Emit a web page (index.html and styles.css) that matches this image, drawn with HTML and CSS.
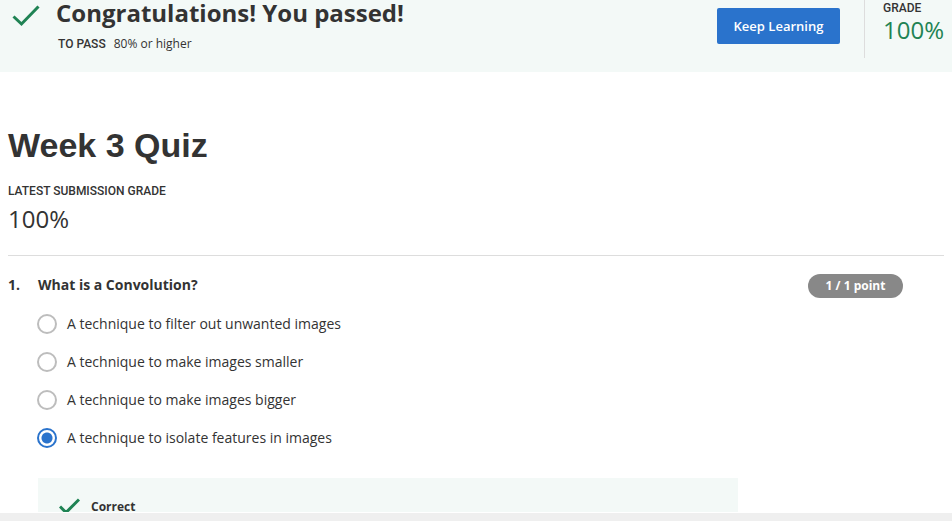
FILE: index.html
```html
<!DOCTYPE html>
<html lang="en">
<head>
<meta charset="utf-8">
<meta name="viewport" content="width=device-width, initial-scale=1">
<title>Week 3 Quiz</title>
<link rel="stylesheet" href="styles.css">
</head>
<body>
<header class="banner">
  <svg class="banner-check" viewBox="0 0 28 22" aria-hidden="true"><path d="M1.5 11.5 L9.5 19 L26.5 1.5"/></svg>
  <div class="banner-text">
    <h2 class="banner-title">Congratulations! You passed!</h2>
    <p class="banner-note"><span class="eyebrow">TO PASS</span> <span>80% or higher</span></p>
  </div>
  <button class="continue" type="button">Keep Learning</button>
  <div class="banner-grade">
    <span class="eyebrow">GRADE</span>
    <span class="grade grade-passed">100%</span>
  </div>
</header>
<main class="content">
  <h1 class="title">Week 3 Quiz</h1>
  <section class="latest">
    <span class="eyebrow">LATEST SUBMISSION GRADE</span>
    <span class="grade">100%</span>
  </section>
  <section class="question">
    <span class="number">1.</span>
    <div class="question-body">
      <h3 class="prompt" id="q1">What is a Convolution?</h3>
      <div class="options" role="radiogroup" aria-labelledby="q1">
        <label class="option"><input type="radio" name="q1"> A technique to filter out unwanted images</label>
        <label class="option"><input type="radio" name="q1"> A technique to make images smaller</label>
        <label class="option"><input type="radio" name="q1"> A technique to make images bigger</label>
        <label class="option"><input type="radio" name="q1" checked> A technique to isolate features in images</label>
      </div>
      <div class="feedback">
        <svg class="feedback-check" viewBox="0 0 21 17" aria-hidden="true"><path d="M1 8.5 L7 14.5 L20 1.5"/></svg>
        <strong>Correct</strong>
      </div>
    </div>
    <span class="points">1 / 1 point</span>
  </section>
</main>
<div class="edge"></div>
</body>
</html>
```
FILE: styles.css
```css
* { box-sizing: border-box; }

body {
  display: flex;
  flex-direction: column;
  height: 100vh;
  margin: 0;
  overflow: hidden;
  background: #fff;
  color: #333;
  font: 14px/20px "Open Sans", sans-serif;
}

h1, h2, h3, p { margin: 0; }

.eyebrow {
  font: 500 12px/16px Roboto, sans-serif;
}

.grade {
  font-size: 24px;
  line-height: 28px;
}

.grade-passed { color: #1f8354; }

.banner {
  display: flex;
  flex: none;
  align-items: flex-start;
  height: 72px;
  padding: 0 8px 0 12px;
  background: #f3f9f7;
}

.banner-check {
  width: 28px;
  height: 22px;
  margin: 5px 16px 0 0;
}

.banner-check path, .feedback-check path {
  fill: none;
  stroke: #1f8354;
  stroke-width: 3;
}

.banner-text { flex: 1; }

.banner-title {
  font-size: 24px;
  line-height: 26px;
}

.banner-note {
  display: flex;
  gap: 8px;
  align-items: baseline;
  margin-top: 8px;
  padding-left: 2px;
  font-size: 12px;
}

.continue {
  width: 123px;
  height: 36px;
  margin-top: 8px;
  padding: 0;
  border: 0;
  border-radius: 2px;
  background: #2a73cc;
  color: #fff;
  font: 600 13px/20px "Open Sans", sans-serif;
}

.banner-grade {
  display: flex;
  flex-direction: column;
  height: 58px;
  margin-left: 24px;
  padding-left: 18px;
  border-left: 1px solid #ddd;
}

.content {
  flex: 1;
  min-height: 0;
  overflow: hidden;
  padding: 53px 8px 0;
  border-bottom: 1px solid #fff;
}

.title {
  font: bold 34px/40px "Liberation Sans", Arial, sans-serif;
}

.latest {
  display: flex;
  flex-direction: column;
  gap: 6px;
  padding: 18px 0 22px;
  border-bottom: 1px solid #ddd;
}

.question {
  display: flex;
  align-items: flex-start;
  padding: 18px 41px 0 0;
}

.number {
  width: 30px;
  font-weight: 700;
  line-height: 22px;
}

.question-body { flex: 1; }

.prompt {
  font-size: 14px;
  line-height: 22px;
}

.options {
  display: flex;
  flex-direction: column;
  gap: 18px;
  margin-top: 18px;
}

.option {
  display: flex;
  gap: 10px;
  align-items: center;
}

.option input {
  appearance: none;
  width: 20px;
  height: 20px;
  margin: 0 0 0 -1px;
  border: 2px solid #bdbdbd;
  border-radius: 50%;
}

.option input:checked {
  border-color: #2a73cc;
  background: radial-gradient(circle, #2a73cc 5px, transparent 6px);
}

.feedback {
  display: flex;
  gap: 11px;
  max-width: 700px;
  margin-top: 30px;
  padding: 19px 21px 24px;
  background: #f3f9f7;
  font-size: 12px;
}

.feedback-check {
  width: 21px;
  height: 17px;
  margin-top: 1px;
}

.points {
  width: 95px;
  border-radius: 12px;
  background: #888;
  color: #fff;
  font-size: 12px;
  font-weight: 700;
  line-height: 24px;
  text-align: center;
}

.edge {
  flex: none;
  height: 8px;
  background: #efefef;
}
```
